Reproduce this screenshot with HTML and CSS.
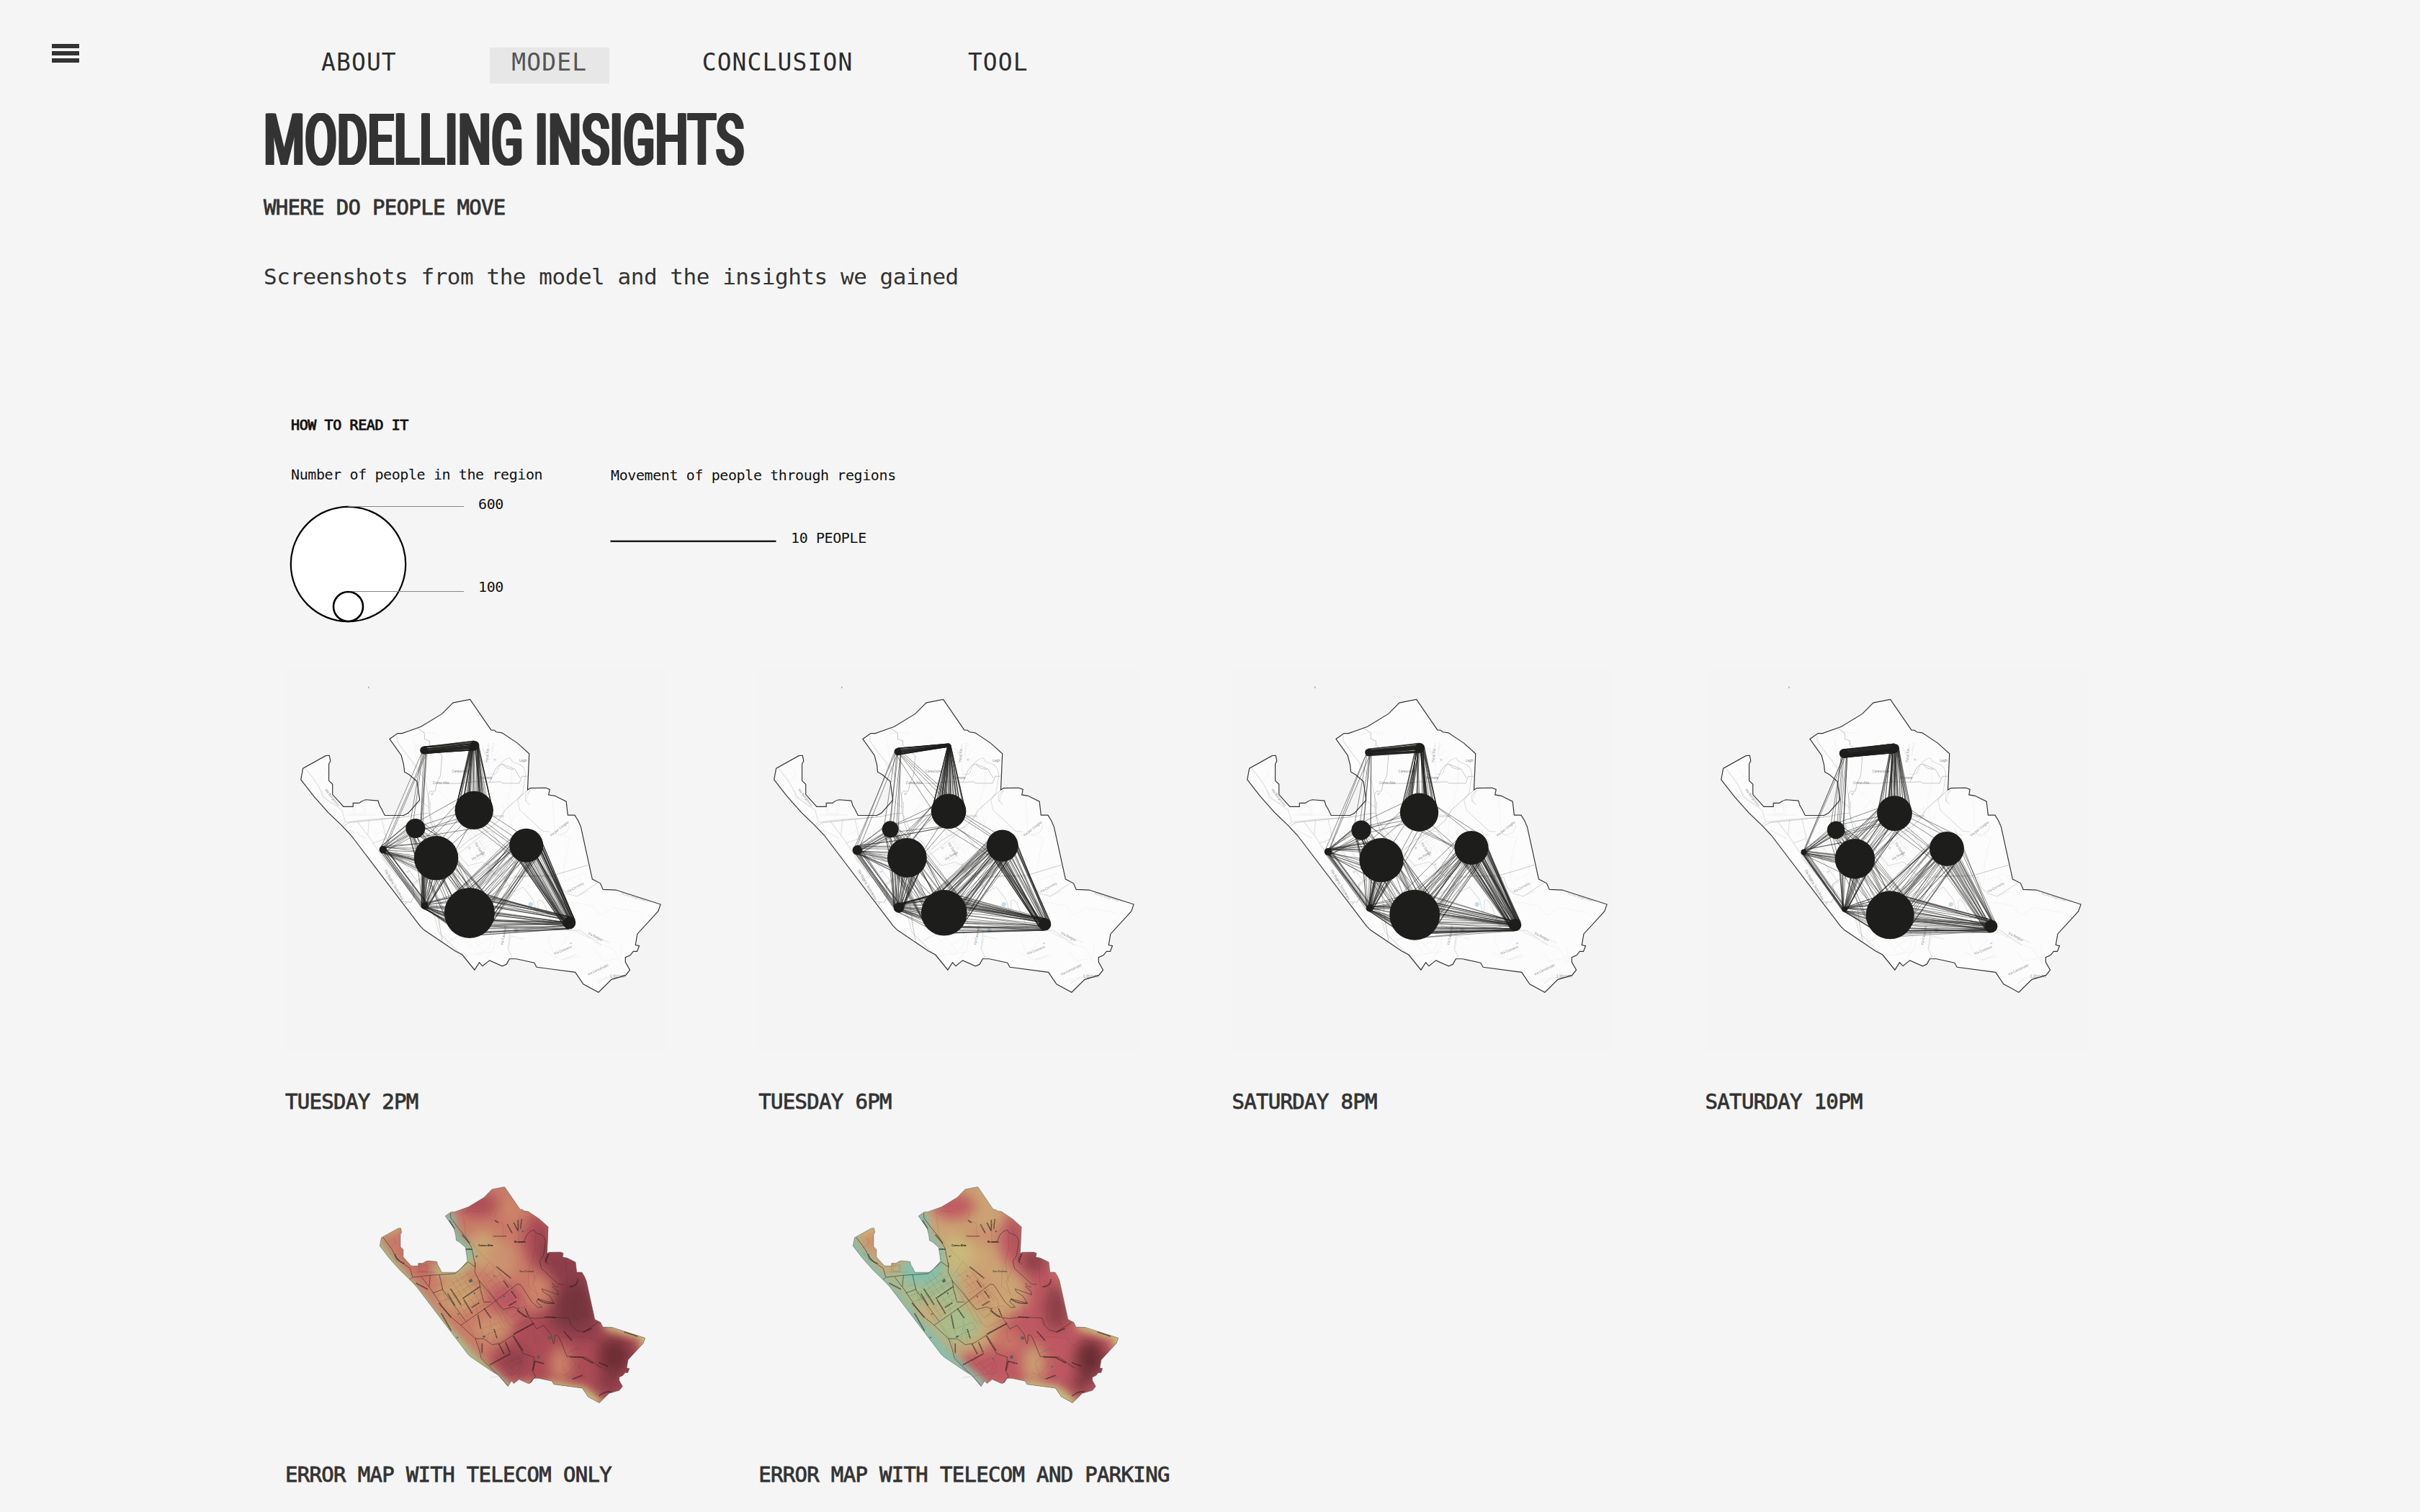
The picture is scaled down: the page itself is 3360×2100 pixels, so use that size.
FILE: index.html
```html
<!DOCTYPE html>
<html lang="en">
<head>
<meta charset="utf-8">
<title>Modelling Insights</title>
<link rel="stylesheet" href="styles.css">
</head>
<body>
<svg class="defs" width="0" height="0" aria-hidden="true">
  <defs>
    <path id="outline" d="M102,456L110,412L195,363L209,362L213,384L207,395V460L221,474V514L262,561H298V547H321Q335,535 347,534L392,538L397,556L405,570L417,595H488L505,586L548,535L542,490L538,463L508,436L491,426L488,398L479,362L435,298L465,276H482L553,250L632,200L673,157L737,144L816,263L828,264L836,271L857,274L915,314L959,355L953,496L963,489L1021,488L1036,494L1032,515L1055,519L1098,541L1104,594H1130L1143,616L1153,640L1196,843L1226,859L1236,883L1284,885L1452,941L1443,968L1365,1056L1358,1099L1372,1102L1364,1124H1350L1338,1139L1320,1147V1165L1337,1196L1321,1217L1268,1233L1219,1283L1162,1251L1132,1205L987,1185L978,1168L910,1153H885L874,1174L858,1181L810,1159L784,1181L772,1167L754,1196L708,1137L682,1123L565,1041L550,1026L290,672L255,634L205,584L150,520Z"/>
    <clipPath id="town"><use href="#outline" transform="translate(58.5 31.3) scale(.8186 .7904)"/></clipPath>
    <filter id="soft" x="-60%" y="-60%" width="220%" height="220%"><feGaussianBlur stdDeviation="27"/></filter>
    <filter id="edge" filterUnits="userSpaceOnUse" x="0" y="0" width="1380" height="1200"><feGaussianBlur stdDeviation="17"/></filter>

    <g id="main-roads" fill="none">
      <path d="M155,355L170,375Q200,410 210,445L268,485L278,520M437,255V273L465,312L500,355L525,400L535,450L540,478M268,532L278,522L350,514L455,507L510,458L540,480"/>
      <path d="M315,520L352,568L400,640L435,685L480,722L540,778L555,820L565,860L640,935L676,975"/>
      <path d="M352,514L348,560M390,512L405,575L500,705M362,588L405,572M480,722L605,635L715,550Q728,548 735,563L775,625L800,648L818,647"/>
      <path d="M540,460L538,500L555,535L562,575L575,625H605M555,535L610,600L655,656L700,645L718,655Q725,685 765,690L790,694L850,688L930,692L940,722L960,742L990,750L1055,708"/>
      <path d="M540,778H575L610,803L645,797L695,765L785,713M695,765L740,840L785,855L778,912L790,935L765,965"/>
      <path d="M720,375H738L745,368Q755,330 785,325Q788,338 808,342Q832,350 832,378L824,430L808,455L815,485L885,550L907,552M860,545L868,560L885,562M858,560L882,578L886,595L850,582L817,570L822,582L850,600L868,630L800,612L795,625L818,645"/>
      <path d="M848,425L832,440V456L845,468M765,690L795,737L825,722L855,760L866,800Q872,795 870,765Q880,755 890,775L922,852L1000,855L1065,900"/>
    </g>
    <g id="side-roads" fill="none">
      <path d="M430,560L520,500M440,580L540,512M405,620L555,535M455,605L560,540M465,625L565,560M478,645L570,583M490,665L575,608M500,685L590,625M470,505L560,625M455,520L545,650M440,535L525,665M425,560L510,690M410,590L490,712M370,560L395,550L425,640M380,600L430,580M390,625L470,600M500,500L575,600"/>
      <path d="M555,520L600,455L660,530L740,610L750,640L690,690L605,600M575,500L640,570M570,525L620,490M590,545L645,510M610,565L665,530M625,590L690,550M645,610L710,570M660,630L725,590M640,500L730,620M610,500L720,650M670,660L770,640M690,690L745,660M555,535L665,725M570,530L680,715M660,700L700,730L760,700"/>
      <path d="M560,740L640,710L660,745M570,770L650,735M590,790L600,730M620,790L600,700M545,650L570,760M500,705L545,780M550,780L575,860L615,890M620,850L690,930L720,910L740,840M640,845L705,920M650,890L720,855M640,870L705,835M680,905L735,870M600,940L740,920M740,880L735,910L700,960"/>
      <path d="M485,260L515,245L560,250M490,270L500,350L560,420L590,450M630,255L610,285L655,297L658,345M720,280V370M745,280L715,310M750,300L725,330M760,320L730,340M790,330V400L775,460L790,540M765,470L760,560L800,590M915,440L922,560L970,570Q940,680 955,705M800,500L780,540L800,600M850,640L860,670M995,690L1015,725M960,700L1010,680L1040,710"/>
      <path d="M780,740L790,790L810,780M900,770L990,770L1040,780Q1055,810 1070,805L1100,785L1190,800M925,852L900,880L920,930L960,880L930,850M935,830L980,820M920,840L970,810M890,920L940,945L1000,935M1040,890L1100,910L1130,960M1050,920L1070,950L1120,940M1080,960L1110,990L1040,1010M1100,735L1130,750M1125,900V940M180,400L210,380L200,360M185,420L215,460M280,500L370,500"/>
      <path d="M302,470H340V500H302ZM308,475H334V495H308Z"/>
    </g>
    <g id="street-names" fill="none">
      <path d="M432,285L453,320M485,345L516,380M205,425Q215,455 245,465M293,547L342,572M437,570L480,636M425,590L455,640M388,630L440,690M398,672L440,745M488,610L560,560M492,615L528,675M525,648L557,628M577,652L605,692M551,680L562,735M618,738L630,776M568,798V838M638,800L660,842M665,792L684,835M600,887L686,840M700,768L738,828M700,758L784,714M628,478L688,526M658,537L678,565M690,580L710,608M680,640L710,622M714,660L755,688M748,652L762,685M830,687L875,690M800,612Q830,635 870,630M909,748L942,786M935,854L985,856L1030,880M1054,877L1093,893M1055,1017Q1080,995 1106,1000M945,946L986,930M780,910L788,872L827,882M932,561Q965,560 967,530M622,285L636,295M673,302L693,338M700,295L718,330M718,325V282M733,280L728,320M844,425L833,460M990,750L1025,735M1160,750L1215,768"/>
    </g>
    <g id="ponds"><path d="M512,535L525,527L529,540L516,545ZM540,434L552,430L545,441ZM655,598L664,600L660,608ZM570,766L584,765L580,773H570ZM464,674L476,672L472,679ZM460,770H470L465,777ZM716,652L724,649L721,656ZM722,855L729,862L723,867ZM734,327H741V333H734ZM968,892H975V897H968ZM615,515H622V519H615ZM534,586H540V592H534Z"/><circle cx="848" cy="775" r="7"/><circle cx="803" cy="854" r="7"/></g>
    <g id="heat-roads">
      <use href="#side-roads" class="heat-side"/>
      <use href="#main-roads" class="heat-main"/>
      <use href="#street-names" class="heat-names"/>
      <use href="#ponds" class="heat-ponds"/>
      <g class="heat-labels">
        <text x="613" y="355">Carescione</text><text x="552" y="393" class="strong">Como Alta</text>
        <text x="702" y="378" class="strong">Brunate</text><text x="724" y="500">San Donato</text><text x="500" y="407" class="strong">omo</text>
      </g>
    </g>

    <g id="basemap">
      <rect width="530" height="530" class="sheet"/>
      <use href="#outline" class="land" transform="translate(-16 -10) scale(.3699 .35714)"/>
      <g transform="scale(.4519) translate(-93.9 -53.4)">
        <use href="#side-roads" class="map-side"/>
        <use href="#main-roads" class="map-main"/>
        <use href="#street-names" class="map-names"/>
        <use href="#ponds" class="map-ponds"/>
      </g>
      <g transform="translate(-16 -10) scale(.3699 .35714)" class="map-borders">
        <path d="M540,256L566,275V298L585,305V322L632,362L626,440L612,470L606,500L595,502L588,500L580,512L582,570L590,620L607,670L650,750L700,840"/>
        <path d="M612,470L690,471L750,464L812,466L850,464L860,470H922L932,443H952M953,498L918,528L870,572L845,615L815,640L730,693L690,730"/>
        <path d="M262,637L284,623L500,600L548,590L584,586M900,832L1050,828L1180,788M480,930L515,933L528,910L520,862L552,840M604,870L612,940L620,1010L633,1085"/>
        <path d="M811,466L830,420Q850,385 870,400L905,415L925,450M860,395Q870,415 900,416"/>
      </g>
      <g class="map-labels">
        <text x="231.5" y="142.5">Carescione</text><text x="205" y="158.500">Como Alta</text><text x="270" y="152">Brunate</text>
        <text x="325" y="128">Lagh</text><text x="279" y="205" class="faint">San Donato</text><text x="451" y="428" class="town-name">Lipom</text>
        <text transform="translate(281 129) rotate(-85)">Via al Piz</text>
        <text transform="translate(374 396) rotate(-22)">Via Cuzzano</text>
        <text transform="translate(421 425) rotate(-26)">Via Cantaluppi</text>
        <text transform="translate(392 310) rotate(-28)">Via Cornelio</text>
        <text transform="translate(420 367) rotate(28)">Via Belgioi</text>
        <text transform="translate(466 312) rotate(17)" class="faint">Vicolo degli Ulivi</text>
        <text transform="translate(302 383) rotate(-78)">Via Casartelli</text>
        <text transform="translate(369 232) rotate(-38)">Via per Civiglio</text>
        <text transform="translate(138 279) rotate(60)">Via Regina Teodolinda</text>
        <text transform="translate(55 167) rotate(52)">Via Borgovico</text>
        <text transform="translate(263 241) rotate(58)">Via Dante</text>
        <text transform="translate(260 265) rotate(-32)">Via Roma</text>
      </g>
      <use href="#outline" class="border" transform="translate(-16 -10) scale(.3699 .35714)"/>
      <rect x="115" y="23.500" width="1.500" height="2.500" class="speck"/>
    </g>
  </defs>
</svg>

<div class="page">
  <aside class="side">
    <button class="menu" aria-label="Menu"><span></span><span></span><span></span></button>
  </aside>
  <main class="main">
    <nav class="nav">
      <a class="nav-link">ABOUT</a>
      <a class="nav-link active">MODEL</a>
      <a class="nav-link">CONCLUSION</a>
      <a class="nav-link">TOOL</a>
    </nav>
    <h1 class="title">MODELLING INSIGHTS</h1>
    <h2 class="subtitle">WHERE DO PEOPLE MOVE</h2>
    <p class="intro">Screenshots from the model and the insights we gained</p>

    <svg class="legend" width="900" height="320" viewBox="0 0 900 320">
      <g class="legend-text">
        <text x="38" y="36.500" class="legend-title">HOW TO READ IT</text>
        <text x="38" y="106">Number of people in the region</text>
        <text x="482" y="106.500">Movement of people through regions</text>
        <text x="298" y="146.500">600</text>
        <text x="298" y="261.500">100</text>
        <text x="732" y="193.500">10 PEOPLE</text>
      </g>
      <circle cx="117.500" cy="223.500" r="79.700" class="ring"/>
      <path d="M117.500 143.500H278M117.500 261.500H278" class="leader"/>
      <circle cx="117.500" cy="282.500" r="20.500" class="ring small"/>
      <path d="M481.500 191.700H711.500" class="flow-key"/>
    </svg>

    <section class="maps">
      <figure class="card"><svg class="map" data-map="tue2" viewBox="0 0 530 530"><use href="#basemap"/></svg><figcaption>TUESDAY 2PM</figcaption></figure>
      <figure class="card"><svg class="map" data-map="tue6" viewBox="0 0 530 530"><use href="#basemap"/></svg><figcaption>TUESDAY 6PM</figcaption></figure>
      <figure class="card"><svg class="map" data-map="sat8" viewBox="0 0 530 530"><use href="#basemap"/></svg><figcaption>SATURDAY 8PM</figcaption></figure>
      <figure class="card"><svg class="map" data-map="sat10" viewBox="0 0 530 530"><use href="#basemap"/></svg><figcaption>SATURDAY 10PM</figcaption></figure>

      <figure class="card">
        <svg class="heat" viewBox="0 0 530 378"><g transform="translate(84 0) scale(.33333)">
          <g clip-path="url(#town)">
            <rect width="1380" height="1200" fill="#c97967"/>
            <g filter="url(#soft)">
              <ellipse cx="555" cy="220" rx="85" ry="50" fill="#ad4d58"/>
              <ellipse cx="690" cy="235" rx="45" ry="50" fill="#cd8569"/>
              <ellipse cx="570" cy="410" rx="75" ry="80" fill="#cba473"/>
              <ellipse cx="650" cy="450" rx="60" ry="80" fill="#cb9370"/>
              <ellipse cx="470" cy="590" rx="90" ry="80" fill="#cba071"/>
              <ellipse cx="605" cy="735" rx="70" ry="45" fill="#cb966f"/>
              <ellipse cx="670" cy="615" rx="75" ry="65" fill="#bc5862"/>
              <path d="M770 250L860 290V420L930 400L1010 480L1080 720L1270 760V1030L1080 1080L700 1000L590 900L610 830L680 770L720 680L850 640L860 540L770 470L730 370Z" fill="#ab4c57"/>
              <ellipse cx="800" cy="580" rx="38" ry="60" fill="#cf856a"/>
              <path d="M820 270L850 380L960 400L1030 520L1070 780L960 790L830 730L860 640L890 560L800 440Z" fill="#8b3e48"/>
              <ellipse cx="950" cy="640" rx="90" ry="90" fill="#76353c"/>
              <ellipse cx="705" cy="865" rx="60" ry="45" fill="#8f404b"/>
              <ellipse cx="1120" cy="850" rx="75" ry="80" fill="#6e2f36"/>
              <ellipse cx="1100" cy="960" rx="55" ry="45" fill="#863b44"/>
              <ellipse cx="895" cy="885" rx="38" ry="70" fill="#d08469"/>
              <ellipse cx="330" cy="485" rx="45" ry="25" fill="#c25f62"/>
            </g>
            <g filter="url(#edge)" fill="none" stroke-width="50">
              <path d="M125 340V390L350 670L520 860L680 1000" stroke="#a7c389"/>
              <path d="M235 300L160 330" stroke="#c9bd7d" stroke-width="30"/>
              <path d="M235 380V440L270 470" stroke="#c66963" stroke-width="18"/>
              <path d="M415 250L440 350L500 420L495 460" stroke="#83c2a8" stroke-width="60"/>
              <path d="M370 470L390 500L470 500L520 450" stroke="#b8bf83" stroke-width="32"/>
              <path d="M1085 715L1270 765L1240 825" stroke="#cfc47c" stroke-width="46"/>
              <path d="M820 975L985 1000L1060 1060" stroke="#cbc27b" stroke-width="48"/>
              <path d="M690 985L790 965" stroke="#cc9970" stroke-width="36"/>
            </g>
          </g>
          <use href="#heat-roads"/>
          <use href="#outline" class="heat-border" transform="translate(58.5 31.3) scale(.8186 .7904)"/>
        </g></svg>
        <figcaption>ERROR MAP WITH TELECOM ONLY</figcaption>
      </figure>

      <figure class="card">
        <svg class="heat" viewBox="0 0 530 378"><g transform="translate(84 0) scale(.33333)">
          <g clip-path="url(#town)">
            <rect width="1380" height="1200" fill="#cba374"/>
            <g filter="url(#soft)">
              <ellipse cx="560" cy="225" rx="90" ry="55" fill="#bf5a61"/>
              <ellipse cx="660" cy="350" rx="90" ry="35" fill="#cc8d6d"/>
              <ellipse cx="580" cy="420" rx="70" ry="70" fill="#c9b97a"/>
              <path d="M260 480L560 480L600 620L640 700L680 750L620 800L520 800L300 560Z" fill="#a9bc8b"/>
              <ellipse cx="440" cy="525" rx="100" ry="45" fill="#99bc98"/>
              <ellipse cx="465" cy="670" rx="60" ry="35" fill="#caa875"/>
              <ellipse cx="605" cy="725" rx="70" ry="60" fill="#a6bd8b"/>
              <ellipse cx="660" cy="580" rx="65" ry="55" fill="#cd9570"/>
              <path d="M790 240L860 290V400L940 390L1010 480L1080 720L1270 760V1030L1080 1080L860 980L700 980L570 890L600 840L700 830L770 700L860 640L870 540L770 450L740 370Z" fill="#be5962"/>
              <ellipse cx="790" cy="790" rx="50" ry="45" fill="#c97967"/>
              <ellipse cx="895" cy="450" rx="50" ry="60" fill="#8d3f4a"/>
              <ellipse cx="830" cy="350" rx="20" ry="60" fill="#a44a55"/>
              <ellipse cx="990" cy="650" rx="55" ry="95" fill="#8c3f49"/>
              <ellipse cx="1130" cy="860" rx="70" ry="85" fill="#6c2e35"/>
              <ellipse cx="1095" cy="965" rx="50" ry="40" fill="#833b43"/>
              <ellipse cx="895" cy="880" rx="42" ry="75" fill="#cba072"/>
              <ellipse cx="220" cy="385" rx="22" ry="45" fill="#cc7d68"/>
            </g>
            <g filter="url(#edge)" fill="none">
              <path d="M120 340V390L350 670L520 860L680 1000" stroke="#86c0ac" stroke-width="78"/>
              <path d="M415 250L440 350L490 420L490 470L450 510L390 510L360 460" stroke="#83c0ae" stroke-width="60"/>
              <path d="M235 300L160 330" stroke="#c9bd7d" stroke-width="34"/>
              <path d="M235 380V440L270 470L330 480" stroke="#cba274" stroke-width="24"/>
              <path d="M1085 715L1270 765L1240 825" stroke="#cfc47c" stroke-width="46"/>
              <path d="M850 980L985 1000L1060 1060" stroke="#c3c57f" stroke-width="54"/>
              <path d="M970 490L1020 520L1040 620" stroke="#cc7568" stroke-width="20"/>
            </g>
          </g>
          <use href="#heat-roads"/>
          <use href="#outline" class="heat-border" transform="translate(58.5 31.3) scale(.8186 .7904)"/>
        </g></svg>
        <figcaption>ERROR MAP WITH TELECOM AND PARKING</figcaption>
      </figure>
    </section>
  </main>
</div>
<script src="flows.js"></script>
</body>
</html>
```

FILE: styles.css
```css
* { box-sizing: border-box; }

body {
  margin: 0;
  background: #f5f5f5;
  color: #333;
  font-family: "DejaVu Sans Mono", "Liberation Mono", monospace;
}

.defs { position: absolute; }

.page {
  display: grid;
  grid-template-columns: 366px 2629px;
  height: 2100px;
  overflow: hidden;
}

.side { padding: 61px 0 0 72px; }

.menu {
  display: flex;
  flex-direction: column;
  gap: 4px;
  width: 38px;
  padding: 0;
  border: 0;
  background: none;
}
.menu span { height: 6px; background: #333; }

.nav {
  display: flex;
  gap: 98.500px;
  margin-top: 66px;
  padding-left: 50px;
}
.nav-link {
  height: 50px;
  padding: 0 31px 0 30px;
  font-size: 33px;
  line-height: 41px;
  letter-spacing: 1.1px;
  color: #2d2d2d;
}
.nav-link.active { background: #e7e7e7; color: #555; }

/* condensed headline: a regular face squeezed, with its stems thickened sideways */
.title {
  width: max-content;
  margin: 29px 0 0;
  font: 500 100px/100px Roboto, "Liberation Sans", sans-serif;
  text-shadow: 2px 0 #333, -2px 0 #333, 3px 0 #333, -3px 0 #333;
  transform: scaleX(.651);
  transform-origin: left;
}

.subtitle, figcaption {
  font-size: 29px;
  font-weight: 400;
  line-height: 40px;
  letter-spacing: -.68px;
  white-space: nowrap;
  -webkit-text-stroke: .8px #333;
}
.subtitle { margin: 23px 0 0; }

.intro {
  margin: 56px 0 0;
  font-size: 31px;
  line-height: 40px;
  letter-spacing: -.46px;
}

.legend { display: block; margin-top: 156px; }
.legend-text { font-size: 20px; letter-spacing: -.4px; fill: #111; }
.legend-title { stroke: #111; stroke-width: .9; }
.ring { fill: #fff; stroke: #000; stroke-width: 2.2; }
.ring.small { stroke-width: 2.6; }
.leader { stroke: #888; stroke-width: 1; }
.flow-key { stroke: #1d1d1b; stroke-width: 2.4; }

.maps {
  display: grid;
  grid-template-columns: repeat(4, 657.2px);
  row-gap: 50px;
  margin-top: 50px;
}
.card { margin: 0; padding-left: 30px; }
.map, .heat { display: block; width: 530px; }
.map { height: 530px; }
.heat { height: 378px; }
figcaption { margin-top: 50px; }

.sheet { fill: #f4f4f4; }
.land { fill: #fcfcfc; }
.border { fill: none; stroke: #333; stroke-width: 3.2; }
.map-side { stroke: #edf0f0; stroke-width: 1.6; }
.map-main { stroke: #dcdedd; stroke-width: 2.4; }
.map-names { stroke: #dedede; stroke-width: 3; stroke-dasharray: 3 3; }
.map-ponds { fill: #c9dbe5; }
.map-borders { fill: none; stroke: #aaa; stroke-width: 1.8; }
.map-labels { font: 4.600px "Noto Sans", sans-serif; fill: #888; }
.map-labels .faint { fill: #bbb; }
.map-labels .town-name { font-size: 7.500px; fill: #aaa; }
.speck { fill: #aaa; }

.flow { fill: none; stroke: #1d1d1b; stroke-width: .8; stroke-opacity: .62; }
.region { fill: #1d1d1b; }

.heat-side { stroke: #402c26; stroke-opacity: .2; stroke-width: 2; }
.heat-main { stroke: #372620; stroke-opacity: .6; stroke-width: 3; }
.heat-names { stroke: #261b18; stroke-opacity: .72; stroke-width: 5; stroke-dasharray: 5 1.500 3 1; }
.heat-ponds { fill: #455f5e; fill-opacity: .85; }
.heat-labels { font: 11px "Noto Sans", sans-serif; fill: #251815; }
.heat-labels .strong { font-weight: 700; font-size: 12px; }
.heat-border { fill: none; stroke: #55605a; stroke-width: 2.4; stroke-opacity: .75; }
```

FILE: flows.js
```js
// Regions per hour: [x, y, radius]
const regions = {
  tue2: { A:[192.6,112.1,5.5], B:[262.9,105.4,6.5], C:[262.2,195.4,26.7], D:[180.8,220.4,13.5], E:[135.7,250,5.2], F:[209.6,261.8,30.7], G:[334.7,244.3,23.5], H:[193.7,328.2,5], I:[255.9,337.9,35], J:[394.6,351.8,8.7] },
  tue6: { A:[193.8,113.9,5.2], B:[264.9,105,2.2], C:[264.1,196.8,24.3], D:[183.1,221.8,11.5], E:[137.3,250.7,6.8], F:[206.4,261.4,27.4], G:[338.8,244.6,22], H:[195,330.7,7.2], I:[257.8,337.8,31.8], J:[397.7,353.9,8.6] },
  sat8: { A:[190.3,115,5.2], B:[261.6,108.6,6.6], C:[260.5,198.2,26.7], D:[179.9,223.2,13.6], E:[134,252.9,5.2], F:[208,264.6,30.7], G:[333,247.5,23.6], H:[191.7,331.4,5], I:[254.2,340.7,35], J:[393.7,354.6,8.6] },
  sat10: { A:[192.2,116.4,6.5], B:[262.5,109.3,6.4], C:[262.5,199.6,24.4], D:[181.1,222.9,12.3], E:[136.4,253.6,4], F:[207.4,262.9,27.8], G:[335,248.9,24], H:[193,333.2,3.6], I:[256.2,340.7,33.5], J:[396.4,356.4,9] }
};

// Number of movements between two regions
const common = { AB:60, AE:3, AD:6, BC:52, CD:5, CF:6, CG:6, DE:11, DF:22, EF:18, EH:14, FH:34, FI:30, HI:30, IJ:42, GI:38, GJ:62 };
const flows = {
  tue2: common,
  tue6: { ...common, AB:45, AC:5, CF:9, GI:56, HI:34, GJ:48 },
  sat8: common,
  sat10: { ...common, AB:90, AD:8, BC:42, CF:32, CG:8, GJ:28, HI:26, FH:26, EF:14, FI:24 }
};

let seed = 7;
const random = () => (seed = (seed * 16807) % 2147483647) / 2147483647;
const limit = t => Math.max(-.97, Math.min(.97, t));

// A line between two regions, shifted sideways by a share of each radius
function line([x1, y1, r1], [x2, y2, r2]) {
  const length = Math.hypot(x2 - x1, y2 - y1);
  const nx = -(y2 - y1) / length;
  const ny = (x2 - x1) / length;
  const shift = (random() * 2 - 1) * .95;
  const from = shift * r1;
  const to = limit(shift + (random() - .5) * 1.1) * r2;
  return `M${(x1 + nx * from).toFixed(1)} ${(y1 + ny * from).toFixed(1)}` +
         `L${(x2 + nx * to).toFixed(1)} ${(y2 + ny * to).toFixed(1)}`;
}

function add(svg, name, attributes) {
  const el = document.createElementNS('http://www.w3.org/2000/svg', name);
  for (const key in attributes) el.setAttribute(key, attributes[key]);
  svg.appendChild(el);
}

document.querySelectorAll('[data-map]').forEach(svg => {
  const nodes = regions[svg.dataset.map];
  const links = flows[svg.dataset.map];
  for (const pair in links) {
    for (let i = 0; i < links[pair]; i++) {
      add(svg, 'path', { class: 'flow', d: line(nodes[pair[0]], nodes[pair[1]]) });
    }
  }
  for (const key in nodes) {
    const [cx, cy, r] = nodes[key];
    add(svg, 'circle', { class: 'region', cx, cy, r });
  }
});
```
